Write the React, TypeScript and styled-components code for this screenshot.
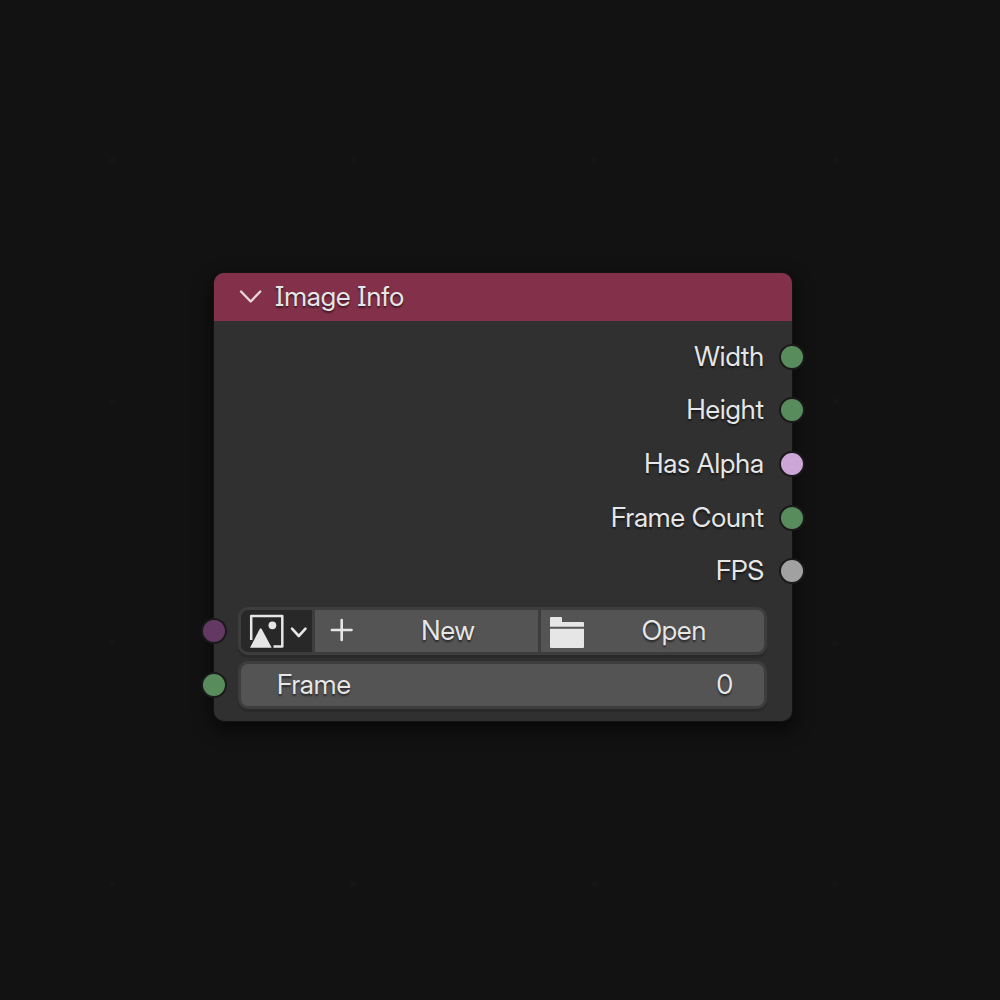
import React, { useState } from "react";
import styled, { createGlobalStyle } from "styled-components";

const GlobalStyle = createGlobalStyle`
  *, *::before, *::after { box-sizing: border-box; }
  body { margin: 0; background: #121212; }
  button, input { font: inherit; color: inherit; }
`;

const Canvas = styled.main`
  min-height: 100vh;
  display: grid;
  place-items: center;
  padding: 0 0 6px 6px;
  background-color: #121212;
  background-image: radial-gradient(circle, #151515 2px, transparent 4px);
  background-size: 241px 241px;
  background-position: -8px 40px;
  color: #e6e6e6;
  font: 400 27px/32px "Inter Display", Inter, "Liberation Sans", sans-serif;
  text-shadow: 0 2px 2px rgba(0, 0, 0, 0.55);
`;

const NodeCard = styled.article`
  width: min(578px, 90vw);
  border-radius: 10px;
  background: #303030;
  box-shadow: 0 0 0 1px rgba(20, 20, 20, 0.8), 0 7px 18px 2px rgba(0, 0, 0, 0.6);
`;

const Header = styled.header`
  display: flex;
  align-items: center;
  gap: 12px;
  height: 48px;
  padding: 0 24px;
  border-radius: 10px 10px 0 0;
  background: #83314a;
`;

const CollapseButton = styled.button`
  display: grid;
  place-items: center;
  width: 25px;
  height: 32px;
  padding: 0;
  border: 0;
  background: none;
  cursor: pointer;
`;

const Title = styled.h1`
  margin: 0;
  font-size: 27px;
  font-weight: 400;
  font-feature-settings: "cv08" 1;
`;

const Outputs = styled.ul`
  display: grid;
  grid-auto-rows: 1fr;
  height: 268px;
  margin: 9px 0;
  padding: 0;
  list-style: none;
`;

const Output = styled.li`
  position: relative;
  display: flex;
  align-items: center;
  justify-content: flex-end;
  padding-right: 28px;
`;

const Socket = styled.span<{ $color: string; $side: "left" | "right" }>`
  position: absolute;
  top: 50%;
  ${(p) => p.$side}: 0;
  width: 26px;
  height: 26px;
  border: 2px solid #1a1a1a;
  border-radius: 50%;
  background: ${(p) => p.$color};
  transform: translate(${(p) => (p.$side === "left" ? "-50%" : "50%")}, -50%);
`;

const Inputs = styled.div`
  display: grid;
  gap: 6px;
  padding-bottom: 12px;
`;

const InputRow = styled.div`
  position: relative;
  padding: 0 25px 0 24px;
`;

const Field = styled.div`
  display: flex;
  gap: 3px;
  height: 48px;
  border: 3px solid #3d3d3d;
  border-radius: 10px;
  background: #3d3d3d;
  box-shadow: 0 3px 0 #292929;
`;

const PickerButton = styled.button`
  display: flex;
  align-items: center;
  gap: 5px;
  width: 71px;
  padding: 0 0 0 8px;
  border: 0;
  border-radius: 7px 0 0 7px;
  background: #282828;
  cursor: pointer;
`;

const ActionButton = styled.button<{ $last?: boolean }>`
  display: grid;
  grid-template-columns: 34px 1fr;
  align-items: center;
  flex: 1;
  padding: 0 8px 0 9px;
  border: 0;
  border-radius: ${(p) => (p.$last ? "0 7px 7px 0" : "0")};
  background: #545454;
  text-shadow: inherit;
  cursor: pointer;
`;

const ActionText = styled.span`
  padding-left: 8px;
  text-align: center;
`;

const NumberField = styled(Field)`
  align-items: center;
  justify-content: space-between;
  padding: 0 31px 0 36px;
  background: #545454;
`;

const NumberInput = styled.input`
  width: 160px;
  padding: 0;
  border: 0;
  outline: 0;
  background: none;
  text-align: right;
  text-shadow: inherit;
`;

const OUTPUTS = [
  { name: "Width", color: "#598c5c" },
  { name: "Height", color: "#598c5c" },
  { name: "Has Alpha", color: "#cca6d6" },
  { name: "Frame Count", color: "#598c5c" },
  { name: "FPS", color: "#a1a1a1" },
];

const CollapseIcon = () => (
  <svg width="24" height="16" viewBox="0 0 24 16" fill="none" stroke="#e6d5da" strokeWidth="2.4" strokeLinecap="round" strokeLinejoin="round" aria-hidden="true">
    <path d="M2 2.5 11.7 12.5 21.3 2.5" />
  </svg>
);

const ImageIcon = () => (
  <svg width="36" height="36" viewBox="0 0 36 36" aria-hidden="true">
    <path d="M2.2 27V3H33.3V33.5H24.5" fill="none" stroke="#e6e6e6" strokeWidth="2.5" strokeLinejoin="round" />
    <circle cx="23.4" cy="12.3" r="3.9" fill="#e6e6e6" />
    <path d="M1 34.7 10.7 16Q11.7 14.5 12.7 16L22.7 34.7Z" fill="#e6e6e6" />
  </svg>
);

const DownIcon = () => (
  <svg width="18" height="18" viewBox="0 0 18 18" fill="none" stroke="#e6e6e6" strokeWidth="2.6" strokeLinecap="round" strokeLinejoin="round" aria-hidden="true">
    <path d="M2 6.7 8.8 14 15.5 6.7" />
  </svg>
);

const PlusIcon = () => (
  <svg width="34" height="34" viewBox="0 0 34 34" fill="none" stroke="#e6e6e6" strokeWidth="2.6" strokeLinecap="round" aria-hidden="true">
    <path d="M17.7 6V26M7.9 16H27.5" />
  </svg>
);

const FolderIcon = () => (
  <svg width="34" height="34" viewBox="0 0 34 34" fill="#e6e6e6" aria-hidden="true">
    <path d="M0 4Q0 3 1 3H11Q12 3 12 4V8H33Q34 8 34 9V12.7H0Z" />
    <path d="M0 14.8H34V33Q34 34 33 34H1Q0 34 0 33Z" />
  </svg>
);

export default function App() {
  const [frame, setFrame] = useState("0");
  return (
    <>
      <GlobalStyle />
      <Canvas>
        <NodeCard>
          <Header>
            <CollapseButton type="button" aria-label="Collapse node">
              <CollapseIcon />
            </CollapseButton>
            <Title>Image Info</Title>
          </Header>
          <Outputs>
            {OUTPUTS.map((o) => (
              <Output key={o.name}>
                {o.name}
                <Socket $color={o.color} $side="right" />
              </Output>
            ))}
          </Outputs>
          <Inputs>
            <InputRow>
              <Socket $color="#633863" $side="left" />
              <Field>
                <PickerButton type="button" aria-label="Browse images">
                  <ImageIcon />
                  <DownIcon />
                </PickerButton>
                <ActionButton type="button">
                  <PlusIcon />
                  <ActionText>New</ActionText>
                </ActionButton>
                <ActionButton type="button" $last>
                  <FolderIcon />
                  <ActionText>Open</ActionText>
                </ActionButton>
              </Field>
            </InputRow>
            <InputRow>
              <Socket $color="#598c5c" $side="left" />
              <NumberField>
                <label htmlFor="frame">Frame</label>
                <NumberInput
                  id="frame"
                  inputMode="numeric"
                  value={frame}
                  onChange={(e) => setFrame(e.target.value)}
                />
              </NumberField>
            </InputRow>
          </Inputs>
        </NodeCard>
      </Canvas>
    </>
  );
}
